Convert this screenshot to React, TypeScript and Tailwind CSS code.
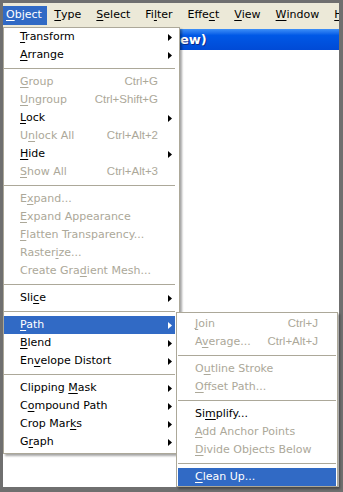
import clsx from "clsx";

type Entry =
  | { label: string; shortcut?: string; sub?: boolean; disabled?: boolean; active?: boolean }
  | "sep";

// "&" marks the mnemonic letter
const mainMenu: Entry[] = [
  { label: "&Transform", sub: true },
  { label: "&Arrange", sub: true },
  "sep",
  { label: "&Group", shortcut: "Ctrl+G", disabled: true },
  { label: "&Ungroup", shortcut: "Ctrl+Shift+G", disabled: true },
  { label: "&Lock", sub: true },
  { label: "U&nlock All", shortcut: "Ctrl+Alt+2", disabled: true },
  { label: "&Hide", sub: true },
  { label: "&Show All", shortcut: "Ctrl+Alt+3", disabled: true },
  "sep",
  { label: "E&xpand...", disabled: true },
  { label: "&Expand Appearance", disabled: true },
  { label: "&Flatten Transparency...", disabled: true },
  { label: "Raster&ize...", disabled: true },
  { label: "Create Gra&dient Mesh...", disabled: true },
  "sep",
  { label: "Sli&ce", sub: true },
  "sep",
  { label: "&Path", sub: true, active: true },
  { label: "&Blend", sub: true },
  { label: "En&velope Distort", sub: true },
  "sep",
  { label: "Clipping &Mask", sub: true },
  { label: "C&ompound Path", sub: true },
  { label: "Crop Mar&ks", sub: true },
  { label: "G&raph", sub: true },
];

const pathMenu: Entry[] = [
  { label: "&Join", shortcut: "Ctrl+J", disabled: true },
  { label: "A&verage...", shortcut: "Ctrl+Alt+J", disabled: true },
  "sep",
  { label: "O&utline Stroke", disabled: true },
  { label: "&Offset Path...", disabled: true },
  "sep",
  { label: "Si&mplify..." },
  { label: "&Add Anchor Points", disabled: true },
  { label: "&Divide Objects Below", disabled: true },
  "sep",
  { label: "&Clean Up...", active: true },
];

const menuBar = ["&Object", "&Type", "&Select", "Fi&lter", "Effe&ct", "&View", "&Window", "&H"];

function Label({ text }: { text: string }) {
  const i = text.indexOf("&");
  if (i < 0) return <>{text}</>;
  return (
    <>
      {text.slice(0, i)}
      <span className="underline underline-offset-[2px]">{text[i + 1]}</span>
      {text.slice(i + 2)}
    </>
  );
}

function Arrow() {
  return (
    <svg width="4" height="7" viewBox="0 0 4 7" className="block">
      <polygon points="0,0 4,3.5 0,7" fill="currentColor" />
    </svg>
  );
}

function MenuRows({ items, arrows }: { items: Entry[]; arrows: boolean }) {
  return (
    <>
      {items.map((it, idx) => {
        if (it === "sep") {
          return (
            <div key={idx} className="flex h-[9px] items-center">
              <div className="h-px flex-1 bg-[#aca899]" />
            </div>
          );
        }
        return (
          <div
            key={idx}
            className={clsx(
              "flex h-[18px] items-center whitespace-nowrap",
              arrows ? "pl-[16px]" : "pl-[17px] pr-[18px]",
              it.active ? "bg-[#316ac5] text-white" : it.disabled ? "text-[#aca899]" : "text-black"
            )}
          >
            <span className="flex-1">
              <Label text={it.label} />
            </span>
            {it.shortcut && (
              <span className="font-['Liberation_Sans',Arial,sans-serif] text-[11.5px]">{it.shortcut}</span>
            )}
            {arrows && (
              <span className="flex w-[17px] justify-end pr-[3px]">{it.sub && <Arrow />}</span>
            )}
          </div>
        );
      })}
    </>
  );
}

export default function App() {
  return (
    <div className="flex h-[492px] w-[343px] flex-col bg-[#6f6f6f] pb-[5px] pl-[3px] pr-[4px] pt-[3px] font-['DejaVu_Sans',sans-serif] text-[11px]">
      {/* menu bar */}
      <div className="flex h-[24px] items-center overflow-hidden bg-[#ece9d8] text-black">
        {menuBar.map((m, i) => (
          <div
            key={m}
            className={clsx(
              "flex h-[19px] items-center whitespace-nowrap",
              i === 0 ? "bg-[#316ac5] pl-[3px] pr-[5px] text-white" : "px-[7.5px]"
            )}
          >
            <Label text={m} />
          </div>
        ))}
      </div>

      {/* workspace */}
      <div className="relative flex flex-1 flex-col bg-[#ece9d8] pt-[2px]">
        <div className="flex h-[21px] items-center bg-linear-to-b from-[#3d8ff7] via-[#0058e6] via-30% to-[#004ad6] pl-[177px]">
          <span className="text-[13px] font-bold text-white [text-shadow:1px_1px_0_#0a2a8a]">ew)</span>
        </div>
        <div className="flex-1 bg-white" />

        {/* Object menu */}
        <div className="absolute left-0 top-0 w-[177px] border border-[#aca899] bg-white pb-[2px] pr-[4px] shadow-[2px_2px_2px_rgba(0,0,0,0.35)]">
          <MenuRows items={mainMenu} arrows />
        </div>

        {/* Path submenu */}
        <div className="absolute left-[173px] top-[285px] w-[162px] border border-[#aca899] bg-white px-[1px] pt-[2px] shadow-[2px_2px_2px_rgba(0,0,0,0.35)]">
          <MenuRows items={pathMenu} arrows={false} />
        </div>
      </div>
    </div>
  );
}
